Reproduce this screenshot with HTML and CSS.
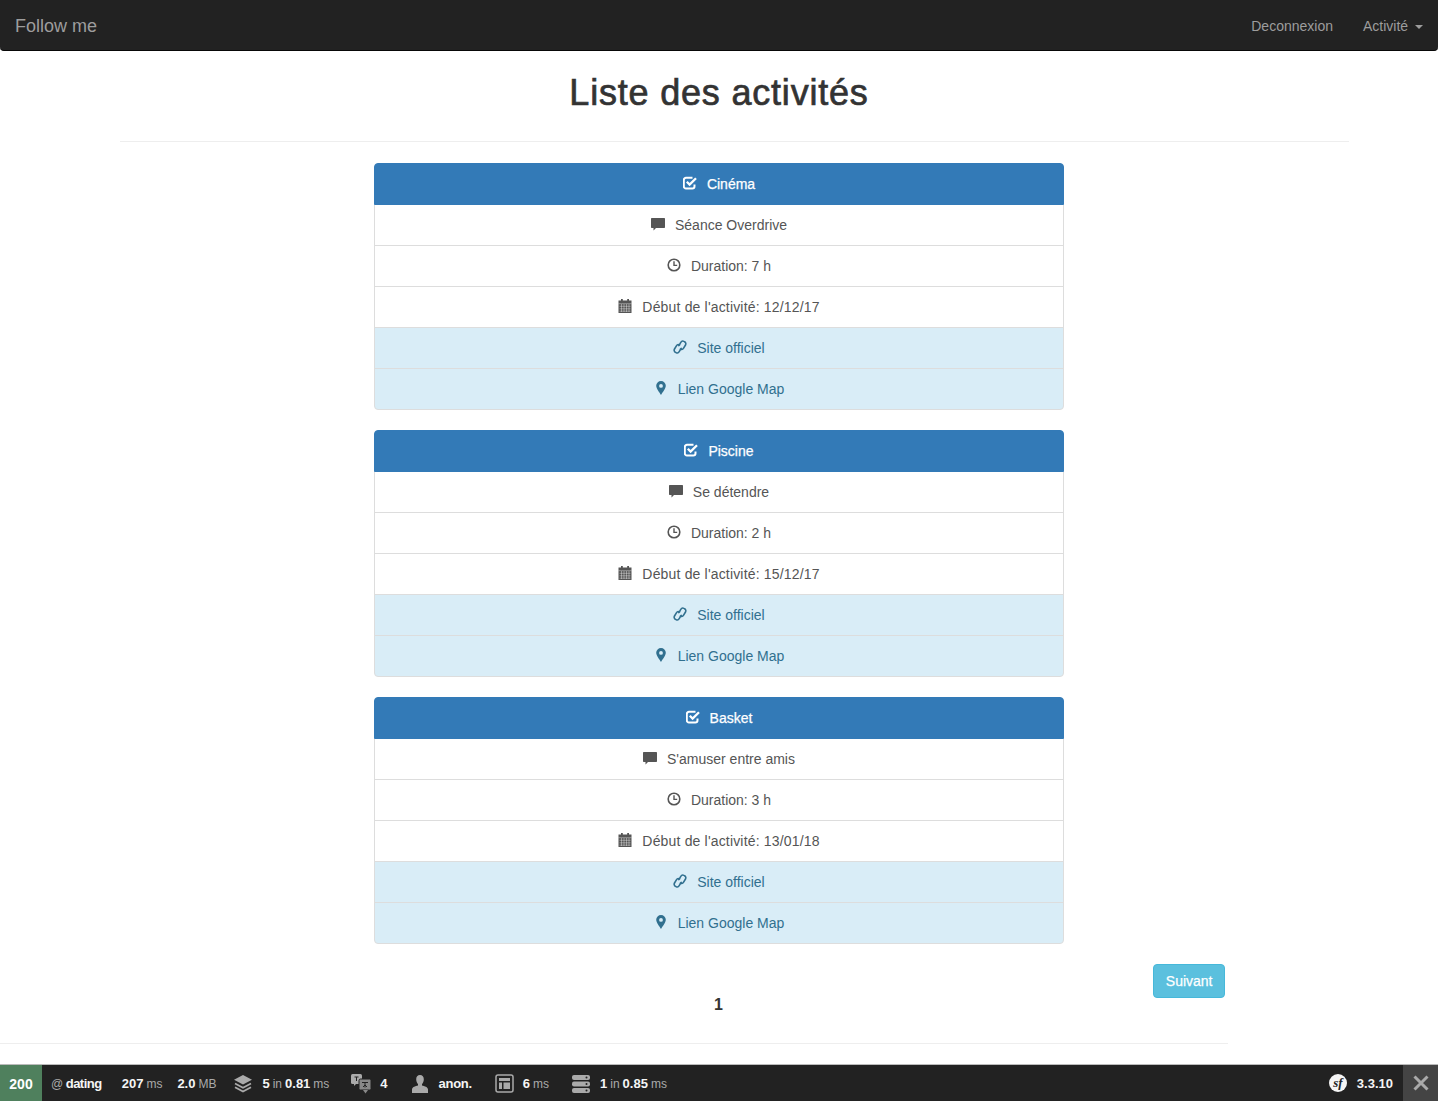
FILE: index.html
```html
<!DOCTYPE html>
<html lang="fr">
<head>
    <meta charset="UTF-8">
    <title>Liste des activités</title>
    <link rel="stylesheet" href="styles.css">
</head>
<body>
    <svg class="sprite" xmlns="http://www.w3.org/2000/svg">
        <symbol id="i-check" viewBox="0 0 14 14">
            <path d="M11.500 8.500v1.800a2.200 2.200 0 0 1-2.200 2.200H3a2.200 2.200 0 0 1-2.200-2.200V4A2.200 2.200 0 0 1 3 1.800h6.500" fill="none" stroke="currentColor" stroke-width="2"/>
            <path d="M3.800 5.800l2.800 2.800L13 2.200" fill="none" stroke="currentColor" stroke-width="2.300"/>
        </symbol>
        <symbol id="i-comment" viewBox="0 0 14 14">
            <path d="M1 1h12.300a.7.7 0 0 1 .7.7v8.600a.7.7 0 0 1-.7.7H5L2.500 13.500V11H.7a.7.7 0 0 1-.7-.7V1.700A.7.7 0 0 1 .7 1z" fill="currentColor"/>
        </symbol>
        <symbol id="i-time" viewBox="0 0 14 14">
            <circle cx="7" cy="7" r="5.800" fill="none" stroke="currentColor" stroke-width="1.600"/>
            <path d="M7 3.300V7.400h3.200" fill="none" stroke="currentColor" stroke-width="1.400"/>
        </symbol>
        <symbol id="i-calendar" viewBox="0 0 14 14">
            <path fill="currentColor" d="M3 0h1.800v1.500h4.400V0H11v1.500h2.500V14H.5V1.500H3z"/>
            <path fill="none" stroke="#fff" stroke-opacity=".55" stroke-width=".7" d="M.5 4.700h13M1.500 7.300h11M1.500 9.800h11M1.500 12.200h11M3.500 5v8M6 5v8M8.500 5v8M11 5v8"/>
        </symbol>
        <symbol id="i-link" viewBox="0 0 14 14">
            <g fill="none" stroke="currentColor" stroke-width="1.600" stroke-linecap="round">
                <path d="M5.800 5.600L7.800 2.300A2.400 2.400 0 0 1 11 1.400L11.600 1.700A2.400 2.400 0 0 1 12.500 5L10.600 8.200A2.400 2.400 0 0 1 7.400 9.100"/>
                <path d="M8.200 8.400L6.200 11.700A2.400 2.400 0 0 1 3 12.600L2.400 12.300A2.400 2.400 0 0 1 1.500 9L3.400 5.800A2.400 2.400 0 0 1 6.600 4.900"/>
            </g>
        </symbol>
        <symbol id="i-marker" viewBox="0 0 14 14">
            <path fill-rule="evenodd" fill="currentColor" d="M7 0a4.800 4.800 0 0 1 4.800 4.800C11.800 7.600 8.500 11.500 7 14 5.500 11.500 2.200 7.600 2.200 4.800A4.800 4.800 0 0 1 7 0zm0 3a1.900 1.900 0 1 0 0 3.800A1.900 1.900 0 0 0 7 3z"/>
        </symbol>
    </svg>

    <nav class="navbar">
        <a class="brand">Follow me</a>
        <div class="nav-links">
            <a>Deconnexion</a>
            <a>Activité <span class="caret"></span></a>
        </div>
    </nav>

    <div class="page-header">
        <h1>Liste des activités</h1>
    </div>

    <main class="activities">
        <ul class="list-group">
            <li class="item head"><svg class="icon"><use href="#i-check"/></svg>Cinéma</li>
            <li class="item"><svg class="icon"><use href="#i-comment"/></svg>Séance Overdrive</li>
            <li class="item"><svg class="icon"><use href="#i-time"/></svg>Duration: 7 h</li>
            <li class="item date"><svg class="icon"><use href="#i-calendar"/></svg>Début de l'activité: 12/12/17</li>
            <li class="item info"><svg class="icon"><use href="#i-link"/></svg>Site officiel</li>
            <li class="item info"><svg class="icon"><use href="#i-marker"/></svg>Lien Google Map</li>
        </ul>
        <ul class="list-group">
            <li class="item head"><svg class="icon"><use href="#i-check"/></svg>Piscine</li>
            <li class="item"><svg class="icon"><use href="#i-comment"/></svg>Se détendre</li>
            <li class="item"><svg class="icon"><use href="#i-time"/></svg>Duration: 2 h</li>
            <li class="item date"><svg class="icon"><use href="#i-calendar"/></svg>Début de l'activité: 15/12/17</li>
            <li class="item info"><svg class="icon"><use href="#i-link"/></svg>Site officiel</li>
            <li class="item info"><svg class="icon"><use href="#i-marker"/></svg>Lien Google Map</li>
        </ul>
        <ul class="list-group">
            <li class="item head"><svg class="icon"><use href="#i-check"/></svg>Basket</li>
            <li class="item"><svg class="icon"><use href="#i-comment"/></svg>S'amuser entre amis</li>
            <li class="item"><svg class="icon"><use href="#i-time"/></svg>Duration: 3 h</li>
            <li class="item date"><svg class="icon"><use href="#i-calendar"/></svg>Début de l'activité: 13/01/18</li>
            <li class="item info"><svg class="icon"><use href="#i-link"/></svg>Site officiel</li>
            <li class="item info"><svg class="icon"><use href="#i-marker"/></svg>Lien Google Map</li>
        </ul>
    </main>

    <div class="pagination">
        <span class="current">1</span>
        <a class="btn-next">Suivant</a>
    </div>

    <hr class="foot-rule">

    <footer class="toolbar">
        <span class="status">200</span>
        <span class="block b-route"><small>@</small> dating</span>
        <span class="block b-time">207 <small>ms</small></span>
        <span class="block b-mem">2.0 <small>MB</small></span>
        <span class="block b-twig">
            <svg class="tb-icon" width="18" height="18" viewBox="0 0 18 18"><path fill="#aaa" d="M9 0l9 4.800-9 4.800L0 4.800z"/><path fill="none" stroke="#aaa" stroke-width="1.800" d="M1 8.500l8 4.200 8-4.200M1 12.300l8 4.300 8-4.300"/></svg>
            5 <small>in</small> 0.81 <small>ms</small>
        </span>
        <span class="block b-trans">
            <svg class="tb-icon" width="21" height="20" viewBox="0 0 21 20"><rect x="0" y="0" width="11" height="10" rx="1.500" fill="#aaa"/><path fill="#aaa" d="M3 9h3l-3 3z"/><rect x="8" y="5" width="12" height="11" rx="1.500" fill="#888" stroke="#222"/><path fill="#888" d="M12 16h5l-2.500 3.500z"/><path fill="none" stroke="#222" stroke-width="1" d="M3.500 3h4M5.500 3v4M11 8.500h6M14 8.500v5M12 13l2-2 2 2"/></svg>
            4
        </span>
        <span class="block b-user">
            <svg class="tb-icon" width="16" height="18" viewBox="0 0 16 18"><path fill="#aaa" d="M8 0c2.500 0 3.800 1.800 3.800 4.200 0 2-.8 3.800-1.800 4.800v1.500c2.500.8 6 1.500 6 4V18H0v-3.500c0-2.500 3.500-3.200 6-4V9C5 8 4.200 6.200 4.200 4.200 4.200 1.800 5.500 0 8 0z"/></svg>
            anon.
        </span>
        <span class="block b-view">
            <svg class="tb-icon" width="19" height="19" viewBox="0 0 19 19"><rect x="1" y="1" width="17" height="17" rx="2" fill="none" stroke="#aaa" stroke-width="1.500"/><path fill="#aaa" d="M4 4h11v3H4zM4 8.500h3V15H4zM8.500 8.500H15V15H8.500z"/></svg>
            6 <small>ms</small>
        </span>
        <span class="block b-db">
            <svg class="tb-icon" width="18" height="18" viewBox="0 0 18 18"><g fill="#aaa"><rect x="0" y="0" width="18" height="5" rx="2"/><rect x="0" y="6.500" width="18" height="5" rx="2"/><rect x="0" y="13" width="18" height="5" rx="2"/></g><g fill="#222"><circle cx="14.500" cy="2.500" r="1"/><circle cx="14.500" cy="9" r="1"/><circle cx="14.500" cy="15.500" r="1"/></g></svg>
            1 <small>in</small> 0.85 <small>ms</small>
        </span>
        <span class="toolbar-right">
            <span class="sf-logo">sf</span>
            <span class="version">3.3.10</span>
        </span>
        <span class="close">
            <svg width="16" height="16" viewBox="0 0 16 16"><path d="M1.500 1.500l13 13M14.500 1.500l-13 13" stroke="#aaa" stroke-width="3" fill="none"/></svg>
        </span>
    </footer>
</body>
</html>
```

FILE: styles.css
```css
* {
    box-sizing: border-box;
}
body {
    font-family: "Liberation Sans", Arial, sans-serif;
    font-size: 14px;
    line-height: 20px;
    margin: 0;
    min-height: 100vh;
    display: flex;
    flex-direction: column;
    background-color: #fff;
    color: #333;
}
.sprite {
    display: none;
}

/* navbar */
.navbar {
    height: 51px;
    flex: none;
    display: flex;
    justify-content: space-between;
    align-items: center;
    background-color: #222;
    border-bottom: 1px solid #080808;
    border-radius: 0 0 4px 4px;
    color: #9d9d9d;
    padding: 2px 15px 0;
}
.brand {
    font-size: 18px;
}
.nav-links {
    display: flex;
    gap: 30px;
    margin-left: -1px;
}
.caret {
    display: inline-block;
    width: 0;
    height: 0;
    margin-left: 3px;
    vertical-align: middle;
    border-top: 4px solid #9d9d9d;
    border-left: 4px solid transparent;
    border-right: 4px solid transparent;
}

/* heading */
.page-header {
    margin: 0 89px 21px 120px;
    border-bottom: 1px solid #eee;
    height: 91px;
}
h1 {
    font-size: 36px;
    font-weight: normal;
    line-height: 40px;
    margin: 22px 0 0;
    padding-right: 31px;
    text-align: center;
    letter-spacing: 0.8px;
    -webkit-text-stroke: 0.7px #333;
}

/* activity lists */
.activities {
    width: 690px;
    margin: 0 auto;
}
.list-group {
    list-style: none;
    margin: 0 0 20px;
    padding: 0;
}
.item {
    height: 42px;
    margin-bottom: -1px;
    display: flex;
    justify-content: center;
    align-items: center;
    gap: 10px;
    background-color: #fff;
    border: 1px solid #ddd;
    color: #555;
}
.list-group .item:last-child {
    margin-bottom: 0;
    border-radius: 0 0 4px 4px;
}
.item.head {
    margin-bottom: 0;
    background-color: #337ab7;
    border-color: #337ab7;
    border-radius: 4px 4px 0 0;
    color: #fff;
    font-weight: 500;
    -webkit-text-stroke: 0.25px #fff;
}
.item.head + .item {
    height: 41px;
    border-top: 0;
}
.item.date {
    letter-spacing: 0.17px;
}
.item.info {
    background-color: #d9edf7;
    color: #31708f;
}
.icon {
    width: 14px;
    height: 14px;
    margin-top: -2px;
    flex: none;
}

/* pagination */
.pagination {
    display: grid;
    grid-template-columns: 1fr auto 1fr;
    align-items: start;
}
.current {
    grid-column: 2;
    margin-top: 31px;
    font-size: 16px;
    font-weight: bold;
    line-height: 20px;
    padding-right: 1px;
}
.btn-next {
    grid-column: 3;
    justify-self: end;
    margin-right: 213px;
    padding: 6px 11.500px;
    background-color: #5bc0de;
    border: 1px solid #46b8da;
    border-radius: 4px;
    color: #fff;
    -webkit-text-stroke: 0.25px #fff;
}
.foot-rule {
    width: 1228px;
    margin: 28px 0 0;
    border: 0;
    border-top: 1px solid #eee;
}

/* debug toolbar */
.toolbar {
    margin-top: auto;
    height: 37px;
    flex: none;
    display: flex;
    align-items: center;
    background-color: #222;
    border-top: 1px solid #bbb;
    color: #f5f5f5;
    font-size: 13px;
    font-weight: bold;
    white-space: nowrap;
}
.toolbar small {
    font-size: 12px;
    font-weight: normal;
    color: #aaa;
}
.status {
    width: 42px;
    height: 36px;
    display: flex;
    align-items: center;
    justify-content: center;
    background-color: #4f805d;
    color: #fff;
    font-size: 14px;
    padding-top: 2px;
}
.block {
    display: flex;
    align-items: center;
    gap: 3px;
    padding-top: 1px;
}
.b-route {
    margin-left: 9px;
    letter-spacing: -0.5px;
}
.b-time {
    margin-left: 20px;
}
.b-mem {
    margin-left: 15px;
}
.b-twig {
    margin-left: 18px;
}
.b-trans {
    margin-left: 22px;
}
.b-user {
    margin-left: 24px;
    letter-spacing: -0.3px;
}
.b-view {
    margin-left: 23px;
}
.b-db {
    margin-left: 23px;
}
.tb-icon {
    margin-right: 7px;
    flex: none;
}
.b-trans .tb-icon {
    margin-right: 5px;
}
.b-user .tb-icon {
    margin-right: 8px;
}
.b-view .tb-icon {
    margin-right: 6px;
}
.toolbar-right {
    margin-left: auto;
    display: flex;
    align-items: center;
    gap: 10px;
    margin-right: 10px;
}
.version {
    padding-top: 1px;
}
.sf-logo {
    width: 18px;
    height: 18px;
    border-radius: 50%;
    background-color: #f5f5f5;
    color: #222;
    font-family: "Liberation Serif", serif;
    font-style: italic;
    font-size: 13px;
    line-height: 17px;
    text-align: center;
}
.close {
    width: 35px;
    height: 36px;
    display: flex;
    align-items: center;
    justify-content: center;
    background-color: #444;
}
```
